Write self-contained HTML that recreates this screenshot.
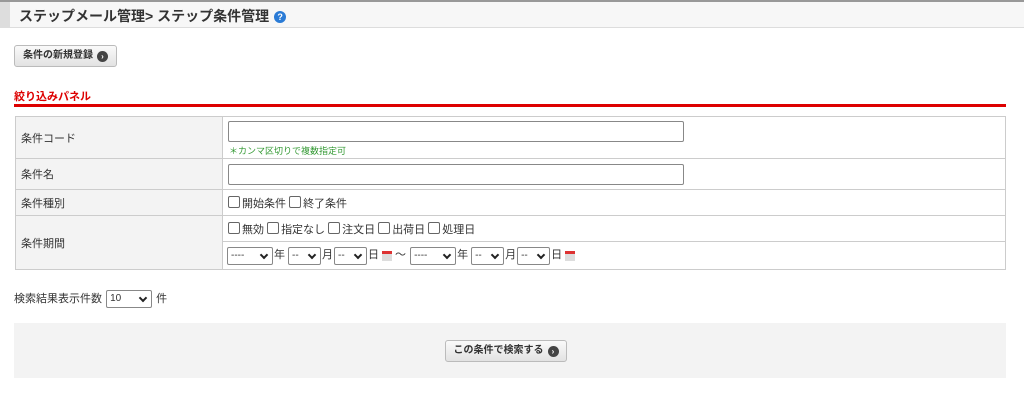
<!DOCTYPE html><html><head><meta charset="utf-8"><style>
body{margin:0;width:1024px;height:404px;background:#fff;font-family:"Liberation Sans","Noto Sans CJK JP",sans-serif;font-size:11px;color:#333;position:relative;overflow:hidden}
.hdr{position:absolute;left:0;top:0;width:1024px;height:28px;background:#f7f7f7;border-bottom:1px solid #ddd;border-top:2px solid #999;box-sizing:border-box}
.hdr .bar{position:absolute;left:0;top:0;width:10px;height:26px;background:#ddd}
.hdr .t{position:absolute;left:19px;top:4px;font-size:14px;font-weight:bold;color:#333}
.q{display:inline-block;width:12px;height:12px;border-radius:50%;background:#2a7bd6;color:#fff;font-size:9px;text-align:center;line-height:12px;vertical-align:1px;margin-left:5px}
.btn{position:absolute;border:1px solid #bbb;border-radius:3px;background:linear-gradient(#fafafa,#e2e2e2);font-size:10px;font-weight:bold;color:#333;box-sizing:border-box;text-align:center}
.ar{display:inline-block;width:11px;height:11px;border-radius:50%;background:#444;color:#fff;font-size:8px;line-height:11px;text-align:center;vertical-align:-1px;margin-left:4px}
.red{position:absolute;left:14px;top:88px;color:#d00;font-weight:bold;font-size:11px}
.line{position:absolute;left:14px;top:104px;width:992px;height:3px;background:#d00}
table{position:absolute;left:15px;top:116px;width:991px;border-collapse:collapse}
td{border:1px solid #ccc;padding:0 5px;font-size:11px}
td.l{background:#f3f3f3;width:196px}
.inp{width:456px;height:21px;border:1px solid #888;border-radius:2px;box-sizing:border-box}
.cb{display:inline-block;width:10px;height:10px;border:1px solid #666;border-radius:2px;vertical-align:-1px;margin:0 2px 0 0}
.s{display:inline-block;height:18px;border:1px solid #888;border-radius:2px;box-sizing:border-box;vertical-align:middle;font-size:10px;line-height:16px;padding-left:3px;position:relative;margin:0 1px}
.s:after{content:"";position:absolute;right:5px;top:4px;width:4px;height:4px;border-right:2px solid #222;border-bottom:2px solid #222;transform:rotate(45deg)}
.cal{display:inline-block;width:10px;height:10px;background:#ddd;border-top:3px solid #d33;box-sizing:border-box;vertical-align:middle;margin:0 3px}
.panel{position:absolute;left:14px;top:323px;width:992px;height:55px;background:#f3f3f3}
</style></head><body>
<div class="hdr"><div class="bar"></div><div class="t">ステップメール管理&gt; ステップ条件管理<span class="q">?</span></div></div>
<div class="btn" style="left:14px;top:45px;width:103px;height:22px;line-height:20px">条件の新規登録<span class="ar">›</span></div>
<div class="red">絞り込みパネル</div><div class="line"></div>
<table>
<tr style="height:42px"><td class="l">条件コード</td><td style="padding-top:3px"><div class="inp"></div><div style="color:#393;font-size:9px;margin:2px 0 0 1px">＊カンマ区切りで複数指定可</div></td></tr>
<tr style="height:31px"><td class="l">条件名</td><td><div class="inp"></div></td></tr>
<tr style="height:26px"><td class="l">条件種別</td><td><span class="cb"></span>開始条件 <span class="cb"></span>終了条件</td></tr>
<tr style="height:26px"><td class="l" rowspan="2">条件期間</td><td><span class="cb"></span>無効 <span class="cb"></span>指定なし <span class="cb"></span>注文日 <span class="cb"></span>出荷日 <span class="cb"></span>処理日</td></tr>
<tr style="height:28px"><td><span class="s" style="width:46px;margin-left:-1px">----</span>年<span class="s" style="width:33px;margin-left:3px">--</span>月<span class="s" style="width:33px">--</span>日<span class="cal"></span>～ <span class="s" style="width:46px">----</span>年<span class="s" style="width:33px;margin-left:3px">--</span>月<span class="s" style="width:33px">--</span>日<span class="cal"></span></td></tr>
</table>
<div style="position:absolute;left:14px;top:290px">検索結果表示件数 <span class="s" style="width:46px">10</span> 件</div>
<div class="panel"></div>
<div class="btn" style="left:445px;top:340px;width:122px;height:22px;line-height:20px">この条件で検索する<span class="ar">›</span></div>
</body></html>
